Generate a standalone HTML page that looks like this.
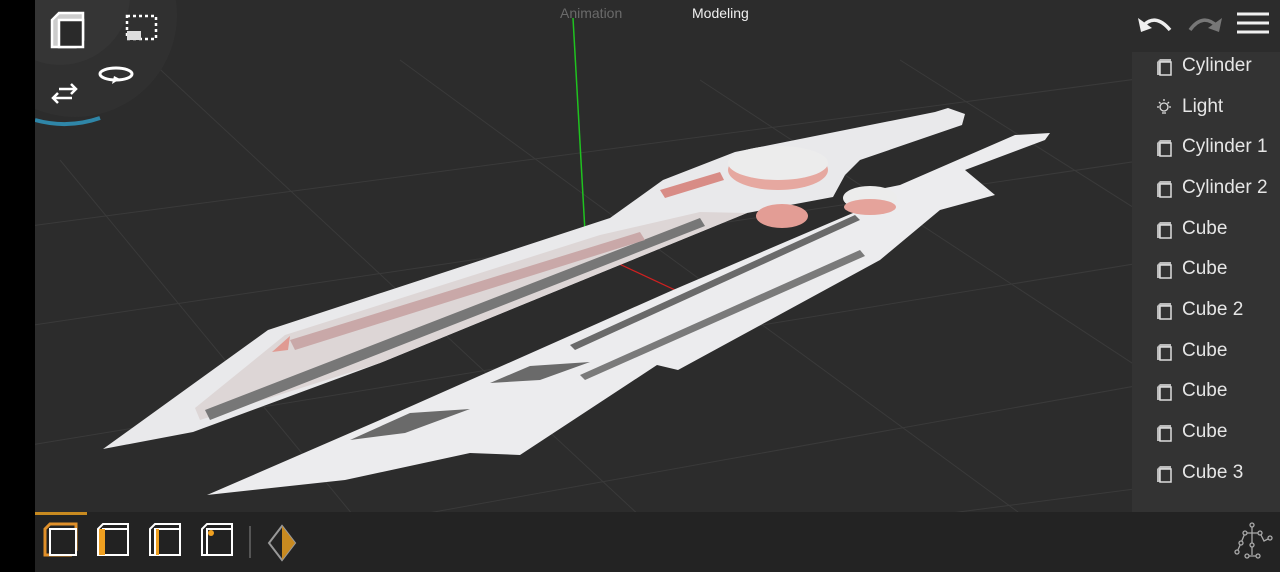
<!DOCTYPE html>
<html><head><meta charset="utf-8"><style>
html,body{margin:0;padding:0;width:1280px;height:572px;overflow:hidden;background:#2c2c2c;font-family:"Liberation Sans",sans-serif}
.abs{position:absolute}
#panel{left:1132px;top:52px;width:148px;height:460px;background:#333333}
.item{position:absolute;left:22px;color:#e6e6e6;font-size:19px;height:24px;line-height:24px}
.item span{position:absolute;left:28px;white-space:nowrap}
</style></head><body>
<svg class="abs" style="left:0;top:0" width="1280" height="572">
<rect width="1280" height="572" fill="#2c2c2c"/>
<g stroke="#3a3a3a" stroke-width="1" fill="none">
<path d="M0 230 L1280 60 M0 330 L1280 140 M0 450 L1280 240 M100 572 L1280 360 M500 572 L1280 470"/>
<path d="M150 60 L700 572 M400 60 L1100 572 M700 80 L1280 460 M900 60 L1280 300 M60 160 L400 572"/>
</g>
<rect x="0" y="512" width="1280" height="60" fill="#232323"/>
<line x1="573" y1="18" x2="585" y2="232" stroke="#1fc21f" stroke-width="1.5"/>
<line x1="600" y1="255" x2="750" y2="325" stroke="#d02020" stroke-width="1.2"/>
<!-- sword 1 -->
<polygon points="103,449 268,330 610,218 663,180 735,152 935,112 948,108 965,114 962,125 860,160 845,175 833,197 747,213 380,363 193,432" fill="#e9e9eb"/>
<polygon points="195,408 285,335 600,235 700,212 747,213 380,363 200,420" fill="#ddd6d6"/>
<polygon points="205,410 700,218 705,226 210,420" fill="#777"/>
<polygon points="290,340 640,232 645,240 295,350" fill="#c9a8a8"/>
<polygon points="272,352 290,336 288,350" fill="#e09a92"/>
<polygon points="660,190 720,172 724,180 665,198" fill="#d88c86"/>
<ellipse cx="778" cy="170" rx="50" ry="20" fill="#e6a8a0"/>
<ellipse cx="778" cy="163" rx="50" ry="17" fill="#ececec"/>
<ellipse cx="782" cy="216" rx="26" ry="12" fill="#e39d95"/>
<!-- sword 2 -->
<polygon points="207,495 380,420 673,290 860,210 850,195 900,185 1015,135 1050,133 1045,140 965,170 995,195 940,210 880,260 678,370 657,365 520,455 470,453 345,480" fill="#ececee"/>
<ellipse cx="870" cy="198" rx="27" ry="12" fill="#ececec"/>
<ellipse cx="870" cy="207" rx="26" ry="8" fill="#e5a39b"/>
<polygon points="350,440 410,413 470,409 405,433" fill="#6a6a6a"/>
<polygon points="490,383 530,366 590,362 540,380" fill="#6a6a6a"/>
<polygon points="570,345 855,215 860,220 575,350" fill="#6a6a6a"/>
<polygon points="580,375 860,250 865,256 585,380" fill="#7a7a7a"/>
<!-- top-left radial -->
<circle cx="75" cy="15" r="102" fill="#303030"/>
<path d="M35 120 A110 110 0 0 0 100 118" stroke="#2f86a8" stroke-width="4" fill="none"/>
<circle cx="60" cy="-5" r="70" fill="#353535"/>
<rect x="0" y="0" width="35" height="572" fill="#000"/>
<g stroke="#fff" stroke-width="2.5" fill="none">
<path d="M52 20 L59 13 L83 13 L83 40 L76 47 L52 47 Z" fill="#ccc"/>
<rect x="59" y="20" width="24" height="27" fill="#2a2a2a" stroke="#fff"/>
<rect x="127" y="16" width="29" height="23" stroke-dasharray="3 3"/>
<ellipse cx="116" cy="74" rx="16" ry="6" stroke-width="3"/>
<path d="M54 98 L72 98 M58 93 L53 98 L58 103 M59 89 L76 89 M71 84 L76 89 L71 94"/>
</g>
<rect x="127" y="31" width="14" height="9" fill="#ddd"/>
<path d="M112 84 L120 79 L114 76 Z" fill="#fff"/>
<!-- top right -->
<path d="M1142 27 Q1155 12 1170 30" stroke="#eee" stroke-width="3.5" fill="none"/>
<path d="M1138 18 L1141 32 L1152 28 Z" fill="#eee"/>
<path d="M1190 30 Q1203 12 1218 27" stroke="#777" stroke-width="3.5" fill="none"/>
<path d="M1222 18 L1219 32 L1208 28 Z" fill="#777"/>
<g stroke="#f0f0f0" stroke-width="3"><line x1="1237" y1="14" x2="1269" y2="14"/><line x1="1237" y1="23" x2="1269" y2="23"/><line x1="1237" y1="32" x2="1269" y2="32"/></g>
<!-- bottom toolbar -->
<rect x="35" y="512" width="52" height="3" fill="#c88a20"/>
<g stroke="#fff" stroke-width="2" fill="#222">
<path d="M45 529 L50 524 L76 524 L76 550 L71 555 L45 555 Z" stroke="#e0902a" stroke-width="3"/>
<rect x="50" y="529" width="26" height="26"/>
<path d="M98 529 L103 524 L128 524 L128 550 L123 555 L98 555 Z"/><rect x="103" y="529" width="25" height="26"/>
<path d="M150 529 L155 524 L180 524 L180 550 L175 555 L150 555 Z"/><rect x="155" y="529" width="25" height="26"/>
<path d="M202 529 L207 524 L232 524 L232 550 L227 555 L202 555 Z"/><rect x="207" y="529" width="25" height="26"/>
</g>
<rect x="99" y="529" width="6" height="26" fill="#f0a020"/>
<rect x="156" y="529" width="3" height="26" fill="#f0a020"/>
<circle cx="211" cy="533" r="3" fill="#f0a020"/>
<line x1="250" y1="526" x2="250" y2="558" stroke="#555" stroke-width="2"/>
<path d="M282 526 L295 543 L282 560 L269 543 Z" fill="none" stroke="#999" stroke-width="2"/>
<path d="M282 526 L295 543 L282 560 Z" fill="#c88a20"/>
<g stroke="#aaa" stroke-width="1.3" fill="#2a2a2a">
<path d="M1252 525 V555 M1245 533 H1260 L1264 541 L1270 538 M1245 533 L1241 543 L1237 552 M1247 556 H1258"/>
<circle cx="1252" cy="525" r="2"/><circle cx="1245" cy="533" r="2"/><circle cx="1260" cy="533" r="2"/><circle cx="1270" cy="538" r="2"/><circle cx="1241" cy="543" r="2"/><circle cx="1237" cy="552" r="2"/><circle cx="1252" cy="545" r="2"/><circle cx="1247" cy="556" r="2"/><circle cx="1258" cy="556" r="2"/>
</g>
</svg>
<div class="abs" style="left:560px;top:5px;color:#6a6a6a;font-size:14px">Animation</div>
<div class="abs" style="left:692px;top:5px;color:#f0f0f0;font-size:14px">Modeling</div>
<div class="abs" id="panel">
<div class="item" style="top:2px"><svg width="20" height="20" style="position:absolute;top:3px"><path d="M3 5 L6 2 L17 2 L17 15 L14 18 L3 18 Z" fill="#bbb"/><rect x="6" y="5" width="11" height="13" fill="#333" stroke="#ddd" stroke-width="1.5"/></svg><span>Cylinder</span></div>
<div class="item" style="top:43px"><svg width="20" height="20" style="position:absolute;top:3px"><circle cx="10" cy="9" r="4" fill="none" stroke="#ddd" stroke-width="1.3"/><path d="M10 1v2M3 9h2M15 9h2M5 4l1.5 1.5M15 4l-1.5 1.5M8 15h4" stroke="#ddd" stroke-width="1.3"/></svg><span>Light</span></div>
<div class="item" style="top:83px"><svg width="20" height="20" style="position:absolute;top:3px"><path d="M3 5 L6 2 L17 2 L17 15 L14 18 L3 18 Z" fill="#bbb"/><rect x="6" y="5" width="11" height="13" fill="#333" stroke="#ddd" stroke-width="1.5"/></svg><span>Cylinder 1</span></div>
<div class="item" style="top:124px"><svg width="20" height="20" style="position:absolute;top:3px"><path d="M3 5 L6 2 L17 2 L17 15 L14 18 L3 18 Z" fill="#bbb"/><rect x="6" y="5" width="11" height="13" fill="#333" stroke="#ddd" stroke-width="1.5"/></svg><span>Cylinder 2</span></div>
<div class="item" style="top:165px"><svg width="20" height="20" style="position:absolute;top:3px"><path d="M3 5 L6 2 L17 2 L17 15 L14 18 L3 18 Z" fill="#bbb"/><rect x="6" y="5" width="11" height="13" fill="#333" stroke="#ddd" stroke-width="1.5"/></svg><span>Cube</span></div>
<div class="item" style="top:205px"><svg width="20" height="20" style="position:absolute;top:3px"><path d="M3 5 L6 2 L17 2 L17 15 L14 18 L3 18 Z" fill="#bbb"/><rect x="6" y="5" width="11" height="13" fill="#333" stroke="#ddd" stroke-width="1.5"/></svg><span>Cube</span></div>
<div class="item" style="top:246px"><svg width="20" height="20" style="position:absolute;top:3px"><path d="M3 5 L6 2 L17 2 L17 15 L14 18 L3 18 Z" fill="#bbb"/><rect x="6" y="5" width="11" height="13" fill="#333" stroke="#ddd" stroke-width="1.5"/></svg><span>Cube 2</span></div>
<div class="item" style="top:287px"><svg width="20" height="20" style="position:absolute;top:3px"><path d="M3 5 L6 2 L17 2 L17 15 L14 18 L3 18 Z" fill="#bbb"/><rect x="6" y="5" width="11" height="13" fill="#333" stroke="#ddd" stroke-width="1.5"/></svg><span>Cube</span></div>
<div class="item" style="top:327px"><svg width="20" height="20" style="position:absolute;top:3px"><path d="M3 5 L6 2 L17 2 L17 15 L14 18 L3 18 Z" fill="#bbb"/><rect x="6" y="5" width="11" height="13" fill="#333" stroke="#ddd" stroke-width="1.5"/></svg><span>Cube</span></div>
<div class="item" style="top:368px"><svg width="20" height="20" style="position:absolute;top:3px"><path d="M3 5 L6 2 L17 2 L17 15 L14 18 L3 18 Z" fill="#bbb"/><rect x="6" y="5" width="11" height="13" fill="#333" stroke="#ddd" stroke-width="1.5"/></svg><span>Cube</span></div>
<div class="item" style="top:409px"><svg width="20" height="20" style="position:absolute;top:3px"><path d="M3 5 L6 2 L17 2 L17 15 L14 18 L3 18 Z" fill="#bbb"/><rect x="6" y="5" width="11" height="13" fill="#333" stroke="#ddd" stroke-width="1.5"/></svg><span>Cube 3</span></div>
</div>
</body></html>
